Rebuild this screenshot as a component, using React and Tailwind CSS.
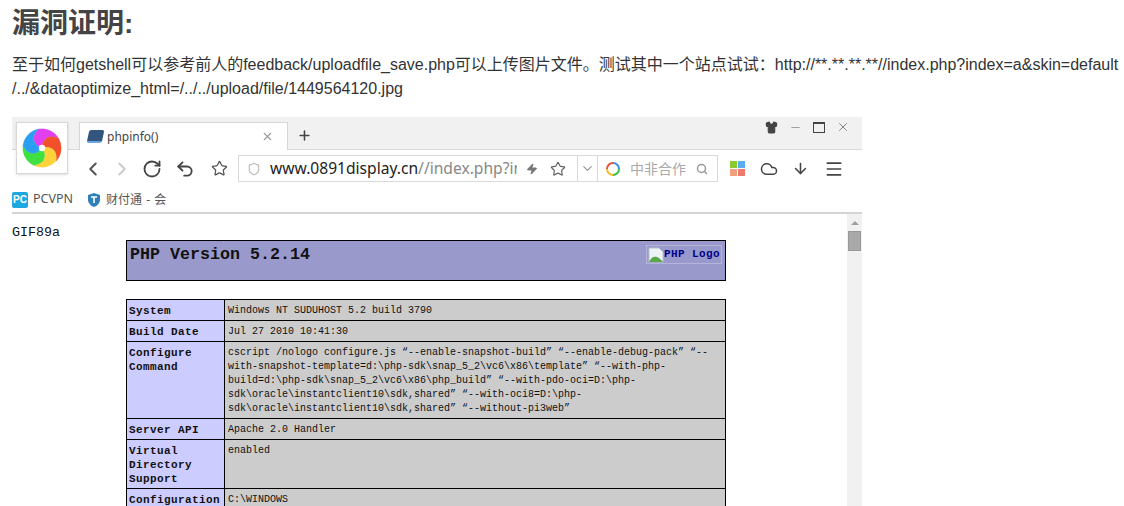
import React from 'react';
import {
  ArrowDown, ChevronDown, ChevronLeft, ChevronRight, Cloud, Menu, Minus, Plus, RotateCw,
  Search, Shield, Shirt, Star, Undo2, X, Zap,
} from 'lucide-react';

const SANS = 'font-["Liberation_Sans","Noto_Sans_CJK_SC",sans-serif]';
const UI = 'font-["Noto_Sans","Noto_Sans_CJK_SC",sans-serif]';
const MONO = 'font-["Liberation_Mono","Noto_Sans_CJK_SC",monospace]';

const rows = [
  { label: ['System'], value: ['Windows NT SUDUHOST 5.2 build 3790'] },
  { label: ['Build Date'], value: ['Jul 27 2010 10:41:30'] },
  {
    label: ['Configure', 'Command'],
    value: [
      'cscript /nologo configure.js “--enable-snapshot-build” “--enable-debug-pack” “--',
      'with-snapshot-template=d:\\php-sdk\\snap_5_2\\vc6\\x86\\template” “--with-php-',
      'build=d:\\php-sdk\\snap_5_2\\vc6\\x86\\php_build” “--with-pdo-oci=D:\\php-',
      'sdk\\oracle\\instantclient10\\sdk,shared” “--with-oci8=D:\\php-',
      'sdk\\oracle\\instantclient10\\sdk,shared” “--without-pi3web”',
    ],
  },
  { label: ['Server API'], value: ['Apache 2.0 Handler'] },
  { label: ['Virtual', 'Directory', 'Support'], value: ['enabled'] },
  { label: ['Configuration'], value: ['C:\\WINDOWS'] },
];

const blades = ['#e23ff0', '#f0502a', '#ffd23a', '#3fe040', '#2a9ff0'];

const SwirlLogo = () => (
  <svg viewBox="0 0 48 48" className="w-[44px] h-[44px]">
    {blades.map((color, i) => (
      <path
        key={color}
        d="M24 24 C15 19 14 9 24 3 A21 21 0 0 1 43.97 17.51 C35.18 9.85 25.97 13.9 24 24 Z"
        fill={color}
        stroke={color}
        strokeWidth="0.3"
        transform={`rotate(${i * 72 - 10} 24 24)`}
      />
    ))}
    <circle cx="24" cy="24" r="3.5" fill="#fff" />
  </svg>
);

const BrokenImage = () => (
  <svg viewBox="0 0 16 16" className="w-4 h-4 shrink-0">
    <path d="M1 1h10l4 4v10H1z" fill="#eef3f8" stroke="#b8c0c8" />
    <path d="M1 15c2-5 5-6 8-5s4 3 6 5z" fill="#5aa84a" />
  </svg>
);

const PhpTable = () => (
  <div className={`w-[600px] ml-[114px] mt-[-2px] ${MONO} text-[#111]`}>
    <div className="h-[41px] border border-black bg-[#9999cc] flex justify-between pl-[3px] pr-[3px] pt-[4px]">
      <span className="text-[16.67px] leading-[20px] font-bold">PHP Version 5.2.14</span>
      <span className="h-[19px] pl-px pr-[1px] border border-[#b4b4dc] flex items-center text-[#000088] text-[11px] font-bold tracking-[0.4px]">
        <BrokenImage />
        PHP Logo
      </span>
    </div>
    <div className="mt-[18px] border-t border-l border-r border-black">
      {rows.map((row) => (
        <div key={row.label[0]} className="flex border-b border-black">
          <div className="w-[98px] shrink-0 bg-[#ccccff] border-r border-black pl-[2px] pt-[4px] pb-[2px] text-[11px] leading-[14px] font-bold tracking-[0.4px] whitespace-nowrap">
            {row.label.map((line) => <div key={line}>{line}</div>)}
          </div>
          <div className="flex-1 bg-[#cccccc] pl-[3px] pt-[4px] pb-[2px] text-[10px] leading-[14px] whitespace-nowrap">
            {row.value.map((line) => <div key={line}>{line}</div>)}
          </div>
        </div>
      ))}
    </div>
  </div>
);

const BrowserShot = () => (
  <div className={`relative w-[850px] h-[390px] mt-[16px] bg-white overflow-hidden flex flex-col ${UI}`}>
    {/* logo hangs over the tab strip and the toolbar */}
    <div className="absolute left-[4px] top-[5px] w-[52px] h-[52px] bg-white border border-[#d8d8d8] shadow-sm flex items-center justify-center">
      <SwirlLogo />
    </div>

    <div className="h-[33px] shrink-0 bg-[#f1f1f1] border-b border-[#d9d9d9] flex items-end pl-[67px]">
      <div className="w-[209px] h-[28px] -mb-px bg-white border border-b-0 border-[#d6d6d6] flex items-center pl-[8px] pr-[13px]">
        <span className="w-[15px] h-[13px] rounded-[2px] bg-[#33567f] border-b-2 border-[#6aa5e0] -skew-x-12" />
        <span className="ml-[4px] text-[12px] text-[#444]">phpinfo()</span>
        <X className="ml-auto w-[13px] h-[13px] text-[#999]" />
      </div>
      <Plus className="ml-[9px] mb-[6px] w-[15px] h-[15px] text-[#444]" strokeWidth={2.5} />
      <div className="ml-auto self-start flex items-center gap-[11px] pr-[12px] pt-[3px] text-[#555]">
        <Shirt className="w-[13px] h-[13px] fill-[#444] text-[#444]" />
        <Minus className="w-[13px] h-[13px]" strokeWidth={1} />
        <span className="w-[12px] h-[11px] border border-t-2 border-[#444]" />
        <X className="w-[14px] h-[14px]" strokeWidth={1.2} />
      </div>
    </div>

    <div className="h-[37px] shrink-0 flex items-center pl-[70px] text-[#555]">
      <ChevronLeft className="w-[22px] h-[22px]" strokeWidth={2.2} />
      <ChevronRight className="ml-[7px] w-[22px] h-[22px] text-[#ccc]" strokeWidth={2.2} />
      <RotateCw className="ml-[9px] w-[20px] h-[20px] text-[#444]" strokeWidth={2.2} />
      <Undo2 className="ml-[13px] w-[20px] h-[20px] text-[#444]" strokeWidth={2.2} />
      <Star className="ml-[16px] w-[17px] h-[17px]" strokeWidth={1.8} />
      <div className="ml-[10px] w-[480px] h-[27px] border border-[#d9d9d9] flex items-center">
        <Shield className="ml-[8px] w-[14px] h-[14px] text-[#bbb]" />
        <div className="ml-[9px] w-[247px] overflow-hidden whitespace-nowrap text-[15.6px]">
          <span className="text-[#222]">www.0891display.cn</span>
          <span className="text-[#888]">//index.php?index=a</span>
        </div>
        <Zap className="ml-[9px] w-[12px] h-[12px] fill-[#777] text-[#777]" />
        <Star className="ml-[12px] w-[16px] h-[16px] text-[#666]" strokeWidth={1.8} />
        <div className="ml-[11px] h-full w-[21px] border-l border-r border-[#d9d9d9] flex items-center justify-center">
          <ChevronDown className="w-[15px] h-[15px] text-[#999]" />
        </div>
        <svg viewBox="0 0 16 16" className="ml-[7px] w-[16px] h-[16px]" fill="none" strokeWidth="2">
          <path d="M8 2a6 6 0 0 1 6 6" stroke="#3a8ee6" />
          <path d="M14 8a6 6 0 0 1-6 6" stroke="#3fc04a" />
          <path d="M8 14a6 6 0 0 1-6-6" stroke="#f0c030" />
          <path d="M2 8a6 6 0 0 1 6-6" stroke="#e8503a" />
        </svg>
        <span className="ml-[9px] text-[14px] text-[#aaa]">中非合作</span>
        <Search className="ml-auto mr-[9px] w-[12px] h-[12px] text-[#999]" strokeWidth={3} />
      </div>
      <div className="ml-[12px] grid grid-cols-2 gap-px w-[15px] h-[15px]">
        <span className="bg-[#8bcb2e]" />
        <span className="bg-[#5aaef0]" />
        <span className="bg-[#f0a080]" />
        <span className="bg-[#ee7a6e]" />
      </div>
      <Cloud className="ml-[15px] w-[18px] h-[18px] text-[#444]" strokeWidth={2} />
      <ArrowDown className="ml-[14px] w-[17px] h-[17px] text-[#444]" strokeWidth={2.2} />
      <Menu className="ml-[15px] w-[20px] h-[20px] text-[#444]" strokeWidth={2} />
    </div>

    <div className="h-[27px] shrink-0 border-b-2 border-[#d4d4d4] flex items-center text-[12.5px] text-[#555]">
      <span className={`w-[16px] h-[16px] rounded-[2px] bg-[#1fa7e0] text-white text-[10px] font-bold leading-[16px] text-center ${SANS}`}>PC</span>
      <span className="ml-[5px]">PCVPN</span>
      <svg viewBox="0 0 16 16" className="ml-[13px] w-[16px] h-[16px]">
        <path d="M8 1l6 2v5c0 3-3 6-6 7-3-1-6-4-6-7V3z" fill="#2f7fb8" />
        <path d="M5 5h6M8 5v6" stroke="#fff" strokeWidth="1.6" />
      </svg>
      <span className="ml-[4px] text-[12px] [word-spacing:1px]">财付通 - 会</span>
    </div>

    <div className="flex flex-1 min-h-0">
      <div className="flex-1 min-w-0">
        <div className={`pt-[10px] text-[13.33px] leading-[18px] text-[#111] ${MONO}`}>GIF89a</div>
        <PhpTable />
      </div>
      <div className="w-[15px] bg-[#f1f1f1] flex flex-col items-center pt-[7px]">
        <span className="w-0 h-0 border-l-[4px] border-r-[4px] border-b-[4px] border-l-transparent border-r-transparent border-b-[#a0a0a0]" />
        <span className="mt-[6px] w-[13px] h-[20px] bg-[#a9a9a9] border border-[#999]" />
      </div>
    </div>
  </div>
);

const App = () => (
  <div className={`w-[1124px] h-[506px] overflow-hidden bg-white pl-[12px] ${SANS}`}>
    <h2 className="pt-[8px] text-[28px] leading-[32px] font-bold text-[#444]">漏洞证明:</h2>
    <p className="mt-[13px] text-[16px] leading-[24px] text-[#333] whitespace-nowrap">
      至于如何getshell可以参考前人的feedback/uploadfile_save.php可以上传图片文件。测试其中一个站点试试：http://**.**.**.**//index.php?index=a&amp;skin=default
      <br />
      /../&amp;dataoptimize_html=/../../upload/file/1449564120.jpg
    </p>
    <BrowserShot />
  </div>
);

export default App;
